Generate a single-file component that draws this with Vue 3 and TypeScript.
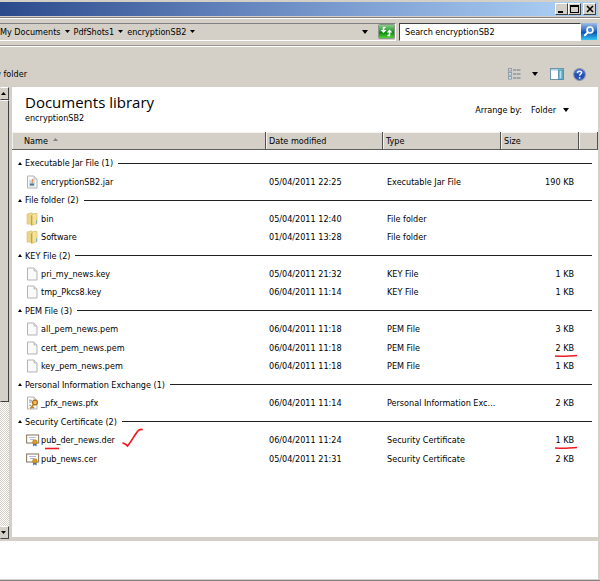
<script setup lang="ts">
import { ref } from 'vue'

type IconKind = 'jar' | 'folder' | 'file' | 'pfx' | 'cert'

interface Entry {
  name: string
  modified: string
  type: string
  size: string
  icon: IconKind
  nameMark?: boolean
  sizeMark?: boolean
}

interface Group {
  label: string
  entries: Entry[]
}

const crumbs: string[] = ['My Documents', 'PdfShots1', 'encryptionSB2']
const query = ref('Search encryptionSB2')

const groups: Group[] = [
  {
    label: 'Executable Jar File',
    entries: [
      { name: 'encryptionSB2.jar', modified: '05/04/2011 22:25', type: 'Executable Jar File', size: '190 KB', icon: 'jar' },
    ],
  },
  {
    label: 'File folder',
    entries: [
      { name: 'bin', modified: '05/04/2011 12:40', type: 'File folder', size: '', icon: 'folder' },
      { name: 'Software', modified: '01/04/2011 13:28', type: 'File folder', size: '', icon: 'folder' },
    ],
  },
  {
    label: 'KEY File',
    entries: [
      { name: 'pri_my_news.key', modified: '05/04/2011 21:32', type: 'KEY File', size: '1 KB', icon: 'file' },
      { name: 'tmp_Pkcs8.key', modified: '06/04/2011 11:14', type: 'KEY File', size: '1 KB', icon: 'file' },
    ],
  },
  {
    label: 'PEM File',
    entries: [
      { name: 'all_pem_news.pem', modified: '06/04/2011 11:18', type: 'PEM File', size: '3 KB', icon: 'file' },
      { name: 'cert_pem_news.pem', modified: '06/04/2011 11:18', type: 'PEM File', size: '2 KB', icon: 'file', sizeMark: true },
      { name: 'key_pem_news.pem', modified: '06/04/2011 11:18', type: 'PEM File', size: '1 KB', icon: 'file' },
    ],
  },
  {
    label: 'Personal Information Exchange',
    entries: [
      { name: '_pfx_news.pfx', modified: '06/04/2011 11:14', type: 'Personal Information Exc...', size: '2 KB', icon: 'pfx' },
    ],
  },
  {
    label: 'Security Certificate',
    entries: [
      { name: 'pub_der_news.der', modified: '06/04/2011 11:24', type: 'Security Certificate', size: '1 KB', icon: 'cert', nameMark: true, sizeMark: true },
      { name: 'pub_news.cer', modified: '05/04/2011 21:31', type: 'Security Certificate', size: '2 KB', icon: 'cert' },
    ],
  },
]
</script>

<template>
  <div class="window">
    <header class="titlebar">
      <button class="caption" aria-label="Minimize">
        <svg width="9" height="8" viewBox="0 0 9 8"><path d="M1 6h5v2H1z" /></svg>
      </button>
      <button class="caption" aria-label="Maximize">
        <svg width="9" height="8" viewBox="0 0 9 8"><path d="M0 0h9v8H0zM1 2v5h7V2z" fill-rule="evenodd" /></svg>
      </button>
      <button class="caption close" aria-label="Close">
        <svg width="8" height="8" viewBox="0 0 8 8"><path d="M1 1l6 6M7 1L1 7" fill="none" stroke="#000" stroke-width="1.6" /></svg>
      </button>
    </header>

    <div class="address-row">
      <nav class="address" aria-label="Address">
        <button v-for="c in crumbs" :key="c" class="crumb">
          {{ c }}<svg width="5" height="3" viewBox="0 0 5 3"><path d="M0 0h5L2.500 3z" /></svg>
        </button>
        <button class="history" aria-label="Previous locations">
          <svg width="6" height="4" viewBox="0 0 6 4"><path d="M0 0h6L3 4z" /></svg>
        </button>
        <button class="refresh" aria-label="Refresh">
          <svg width="17" height="15" viewBox="0 0 17 15">
            <defs>
              <linearGradient id="green" x1="0" y1="0" x2="0" y2="1">
                <stop offset="0" stop-color="#8fcf8c" />
                <stop offset=".45" stop-color="#2c9d35" />
                <stop offset=".55" stop-color="#08850e" />
                <stop offset="1" stop-color="#55d838" />
              </linearGradient>
            </defs>
            <rect x=".5" y=".5" width="16" height="14" rx="1" fill="url(#green)" stroke="#8a9a8a" />
            <path d="M7.500 3.500H5.500v3M9.500 11.500h2V8" fill="none" stroke="#fff" stroke-width="1.600" />
            <path d="M2.500 6h6L5.500 9zM8.500 8.500h6L11.500 5.500z" fill="#fff" />
          </svg>
        </button>
      </nav>
      <input v-model="query" class="search" type="text" aria-label="Search encryptionSB2" />
      <button class="search-go" aria-label="Search">
        <svg width="16" height="17" viewBox="0 0 16 17">
          <defs>
            <linearGradient id="blue" x1="0" y1="0" x2="0" y2="1">
              <stop offset="0" stop-color="#9fbde6" />
              <stop offset=".45" stop-color="#2f6cc4" />
              <stop offset=".55" stop-color="#0b56b4" />
              <stop offset="1" stop-color="#37c5f2" />
            </linearGradient>
          </defs>
          <rect width="16" height="17" fill="url(#blue)" />
          <circle cx="9" cy="7" r="3" fill="#4f8ad0" stroke="#fff" stroke-width="1.600" />
          <path d="M6.800 9.400L3.900 12.300" stroke="#fff" stroke-width="2" stroke-linecap="round" />
        </svg>
      </button>
    </div>

    <div class="toolbar">
      <button class="clipped">New folder</button>
      <div class="tools">
        <button aria-label="Change your view">
          <svg width="13" height="12" viewBox="0 0 13 12">
            <g fill="#fff" stroke="#7c8fa8" stroke-width=".8">
              <rect x=".5" y=".5" width="3" height="2.600" /><rect x=".5" y="4.500" width="3" height="2.600" /><rect x=".5" y="8.500" width="3" height="2.600" />
            </g>
            <path d="M1.500 2h1" stroke="#b33" /><path d="M1.500 6h1M1.500 10h1" stroke="#39a" />
            <path d="M5 2h3.500M9 2h3.500M5 6h3.500M9 6h3.500M5 10h3.500M9 10h3.500" stroke="#68788f" stroke-width="1.200" />
          </svg>
        </button>
        <button class="more" aria-label="More options">
          <svg width="6" height="4" viewBox="0 0 6 4"><path d="M0 0h6L3 4z" /></svg>
        </button>
        <button class="preview" aria-label="Show the preview pane">
          <svg width="14" height="12" viewBox="0 0 14 12">
            <rect x=".5" y=".5" width="13" height="11" fill="#fff" stroke="#6e94ab" />
            <path d="M1 1h12v1.500H1z" fill="#a9cfe0" />
            <rect x="8.500" y="2" width="4.500" height="9.500" fill="#79b9d2" stroke="#438ca9" stroke-width=".8" />
            <path d="M10.500 3v7" stroke="#b8e2ed" />
          </svg>
        </button>
        <button aria-label="Get help">
          <svg width="13" height="13" viewBox="0 0 13 13">
            <circle cx="6.500" cy="6.500" r="5.900" fill="#2450b8" stroke="#8b95ad" stroke-width="1.100" />
            <path d="M1.800 5a4.800 4.200 0 0 1 9.400 0Q6.500 7 1.800 5z" fill="#4a70cc" />
            <path d="M4.500 4.900C4.500 2.500 8.500 2.500 8.500 4.800 8.500 6.200 6.600 6.200 6.600 7.800" fill="none" stroke="#fff" stroke-width="1.400" />
            <circle cx="6.600" cy="9.800" r=".9" fill="#fff" />
          </svg>
        </button>
      </div>
    </div>

    <div class="body">
      <div class="scrollbar">
        <button aria-label="Scroll up"><svg width="5" height="3" viewBox="0 0 5 3"><path d="M0 3h5L2.500 0z" /></svg></button>
        <div class="track"><div class="thumb"></div></div>
        <button aria-label="Scroll down"><svg width="5" height="3" viewBox="0 0 5 3"><path d="M0 0h5L2.500 3z" /></svg></button>
      </div>

      <main class="pane">
        <div class="library">
          <div>
            <h1>Documents library</h1>
            <p>encryptionSB2</p>
          </div>
          <div class="arrange">
            <span>Arrange by:</span>
            <button>Folder<svg width="6" height="4" viewBox="0 0 6 4"><path d="M0 0h6L3 4z" /></svg></button>
          </div>
        </div>

        <table class="files">
          <colgroup>
            <col />
            <col class="c-date" />
            <col class="c-type" />
            <col class="c-size" />
            <col class="c-end" />
          </colgroup>
          <thead>
            <tr>
              <th scope="col" class="first">Name<svg width="5" height="3" viewBox="0 0 5 3"><path d="M0 3h5L2.500 0z" fill="#85817a" /></svg></th>
              <th scope="col">Date modified</th>
              <th scope="col">Type</th>
              <th scope="col">Size</th>
              <td></td>
            </tr>
          </thead>
          <tbody>
            <template v-for="g in groups" :key="g.label">
              <tr>
                <th colspan="5" scope="rowgroup">
                  <button class="group">
                    <svg width="4" height="3" viewBox="0 0 4 3"><path d="M0 3h4L2 0z" /></svg>
                    <span>{{ g.label }} ({{ g.entries.length }})</span>
                    <i></i>
                  </button>
                </th>
              </tr>
              <tr v-for="e in g.entries" :key="e.name">
                <td>
                  <div class="name">
                    <svg v-if="e.icon === 'folder'" width="14" height="14" viewBox="0 0 14 14">
                      <path d="M1 2L5.500.8l1 .7v11L1 12z" fill="#ecd684" stroke="#d8bf68" stroke-width=".6" />
                      <path d="M5.500 3.500l2-2H11v10l-5.500 2z" fill="#f3e29a" stroke="#d0b250" stroke-width=".6" />
                      <path d="M5.800 3.500v9.500" stroke="#b8982f" />
                      <path d="M10.500 8.500v3" stroke="#7ab0b8" />
                    </svg>
                    <svg v-else-if="e.icon === 'cert'" width="14" height="14" viewBox="0 0 14 14">
                      <rect x=".6" y="2" width="12" height="8" fill="#fff" stroke="#8f7f68" stroke-width="1.100" />
                      <path d="M3 4.500h7M4 6.500h4" stroke="#b3b9dc" />
                      <path d="M7.200 10v3.500l1.600-1.300 1.700 1.300V10z" fill="#285fc0" />
                      <circle cx="8.900" cy="9" r="2.300" fill="#d89d1f" stroke="#ab7414" stroke-width=".6" />
                    </svg>
                    <svg v-else width="14" height="14" viewBox="0 0 14 14">
                      <path d="M1.500 1H8l3 3v9H1.500z" fill="#fafafa" stroke="#b3b3b3" />
                      <path d="M8 1v3h3" fill="#e2e2e2" stroke="#b3b3b3" stroke-width=".8" />
                      <g v-if="e.icon === 'jar'">
                        <path d="M3 4.500h6v7H3z" fill="#d3dde6" />
                        <path d="M4 8.500h4v2H4z" fill="#4f7596" />
                        <path d="M6.500 4c1.500 1.500-1.500 2 0 4" fill="none" stroke="#df752c" />
                      </g>
                      <g v-if="e.icon === 'pfx'">
                        <path d="M3 4l3 .5M3 6h3M3 9l2 .5" stroke="#929eae" />
                        <circle cx="9" cy="6.500" r="2.400" fill="#f2c25a" stroke="#b06f17" stroke-width="1.300" />
                        <path d="M7.500 8.500l-3 4M6 11l2 1" stroke="#bf811d" stroke-width="1.600" />
                      </g>
                    </svg>
                    <span>{{ e.name }}</span>
                    <svg v-if="e.nameMark" class="underline" width="16" height="3" viewBox="0 0 16 3">
                      <path d="M1 1.500h14" stroke="#f01820" stroke-width="1.600" />
                    </svg>
                    <svg v-if="e.nameMark" class="check" width="22" height="20" viewBox="0 0 22 20">
                      <path d="M1 15q3 1 4.500 3C10 13 14 4 17 2q2-1 3-.5" fill="none" stroke="#f01820" stroke-width="1.700" stroke-linecap="round" />
                    </svg>
                  </div>
                </td>
                <td>{{ e.modified }}</td>
                <td>{{ e.type }}</td>
                <td class="size">
                  <span>{{ e.size }}<svg v-if="e.sizeMark" width="22" height="3" viewBox="0 0 22 3"><path d="M0 2q8 .5 14 0t8-.5" fill="none" stroke="#f01820" stroke-width="1.600" /></svg></span>
                </td>
                <td></td>
              </tr>
            </template>
          </tbody>
        </table>
      </main>
    </div>

    <footer class="details"></footer>
  </div>
</template>

<style>
body {
  background: #d4d0c8;
}
</style>

<style scoped>
.window {
  display: flex;
  flex-direction: column;
  box-sizing: border-box;
  min-height: 100vh;
  border-bottom: 1px solid #808080;
  background: #d4d0c8;
  color: #000;
  font: 9px/12px "DejaVu Sans Condensed", "DejaVu Sans", sans-serif;
  font-stretch: condensed;
}
svg {
  display: block;
  flex: none;
}
button {
  display: flex;
  align-items: center;
  padding: 0;
  border: 0;
  background: none;
  color: inherit;
  font: inherit;
  white-space: nowrap;
}
.titlebar {
  display: flex;
  justify-content: flex-end;
  align-items: center;
  height: 14px;
  margin: 2px 2px 0 0;
  padding-right: 2px;
  background: linear-gradient(90deg, #2b4a8c, #5b7cb6 34%, #87a9da 67%, #a6caf0 92%);
}
.caption {
  justify-content: center;
  width: 13px;
  height: 12px;
  border: 1px solid;
  border-color: #fff #404040 #404040 #fff;
  background: #d4d0c8;
}
.close {
  margin-left: 2px;
}
.address-row {
  display: flex;
  align-items: center;
  height: 27px;
  margin-top: 1px;
  padding-right: 3px;
  border-top: 1px solid #808080;
  border-bottom: 1px solid #99958e;
  box-shadow: inset 0 1px #fff, 0 1px #fff;
}
.address {
  display: flex;
  flex: 1;
  align-items: center;
  height: 16px;
  margin-right: 3px;
  border-top: 1px solid #808080;
  border-bottom: 1px solid #fff;
  border-right: 1px solid #fff;
}
.crumb {
  gap: 4px;
  margin-right: 4px;
}
.history {
  margin-left: auto;
  margin-right: 10px;
}
.search {
  box-sizing: border-box;
  width: 182px;
  height: 18px;
  padding: 0 5px;
  border: 1px solid;
  border-color: #404040 #fff #fff #404040;
  background: #fff;
  color: inherit;
  font: inherit;
}
.toolbar {
  display: flex;
  align-items: center;
  justify-content: space-between;
  height: 26px;
  padding: 15px 14px 0 0;
  overflow: hidden;
}
.clipped {
  direction: rtl;
  justify-content: flex-start;
  width: 27px;
}
.tools {
  display: flex;
  align-items: center;
}
.more {
  margin: 0 12px 0 11px;
}
.preview {
  margin-right: 9px;
}
.body {
  display: flex;
  flex: 1;
}
.scrollbar {
  display: flex;
  flex-direction: column;
  width: 9px;
  margin-bottom: 2px;
}
.scrollbar button,
.thumb {
  box-sizing: border-box;
  border: 1px solid;
  border-color: #fff #404040 #404040 transparent;
  background: #d4d0c8;
}
.scrollbar button {
  height: 13px;
}
.track {
  flex: 1;
  background: repeating-conic-gradient(#fff 0 25%, #d4d0c8 0 50%) 0 0 / 2px 2px;
}
.thumb {
  height: 71%;
}
.pane {
  flex: 1;
  margin: 0 2px 4px 3px;
  background: #fff;
}
.library {
  display: flex;
  justify-content: space-between;
  height: 39px;
  padding: 6px 29px 0 13px;
}
h1 {
  margin: 0;
  font: 15px/18px "Open Sans", "Noto Sans", sans-serif;
}
p {
  margin: 1px 0 0;
}
.arrange {
  display: flex;
  align-items: center;
  gap: 9px;
  height: 34px;
}
.arrange button {
  gap: 7px;
}
.files {
  width: 100%;
  height: 336px;
  border-collapse: separate;
  border-spacing: 0;
  table-layout: fixed;
}
.c-date {
  width: 117px;
}
.c-type {
  width: 118px;
}
.c-size {
  width: 78px;
}
.c-end {
  width: 19px;
}
.files tbody::before {
  content: "";
  display: table-row;
  height: 4px;
}
.files tbody tr {
  height: 18px;
}
.files th,
.files td {
  padding: 0 0 0 3px;
  font-weight: normal;
  text-align: left;
  white-space: nowrap;
}
.files td + td + td {
  padding-left: 4px;
}
.files thead th,
.files thead td {
  box-sizing: border-box;
  height: 18px;
  border-right: 1px solid #505050;
  border-bottom: 1px solid #606060;
  background: #d4d0c8;
  box-shadow: inset 1px 1px #f4f2ee;
}
.files thead .first {
  padding-left: 12px;
}
.first svg {
  display: inline-block;
  margin-left: 5px;
  vertical-align: 3px;
}
.files tbody th {
  padding: 0 6px;
}
.group {
  gap: 3px;
  width: 100%;
}
.group i {
  flex: 1;
  height: 1px;
  margin-left: 2px;
  background: #202020;
}
.files tbody .name {
  position: relative;
  display: flex;
  align-items: center;
  gap: 1px;
  padding-left: 11px;
}
.underline,
.check {
  position: absolute;
}
.underline {
  left: 29px;
  top: 14px;
}
.check {
  left: 107px;
  top: -5px;
}
.files tbody .size {
  padding-right: 5px;
  text-align: right;
}
.size span {
  position: relative;
}
.size svg {
  position: absolute;
  right: -3px;
  top: 11px;
}
.details {
  height: 38px;
  margin: 0 2px 1px 0;
  background: #fff;
}
</style>
